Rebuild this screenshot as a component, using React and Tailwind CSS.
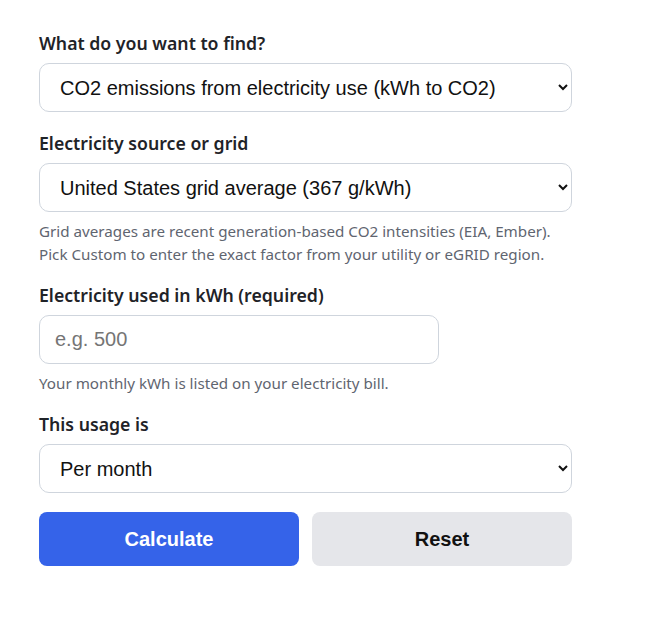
import React from "react";

const labelCls =
  "block mb-2 text-[17.7px] leading-6 font-semibold text-[#1f2328] [font-family:'Noto_Sans',sans-serif]";
const fieldCls =
  "block w-full h-[49px] rounded-[10px] border border-[#cfd5dd] bg-white pl-4 pr-3 text-[20px] text-[#111] [font-family:'Liberation_Sans',Arial,sans-serif] outline-none";
const helpCls =
  "mt-2 text-[15.2px] leading-[23px] text-[#5f6570] [font-family:'Noto_Sans',sans-serif]";

export default function App() {
  return (
    <div className="min-h-[617px] w-[671px] bg-white">
      <form
        className="w-[533px] ml-[39px] pt-[31px] flex flex-col"
        onSubmit={(e) => e.preventDefault()}
      >
        <div>
          <label className={labelCls}>What do you want to find?</label>
          <select className={fieldCls} defaultValue="kwh">
            <option value="kwh">CO2 emissions from electricity use (kWh to CO2)</option>
            <option value="co2">Electricity use from CO2 emissions</option>
          </select>
        </div>

        <div className="mt-[19px]">
          <label className={labelCls}>Electricity source or grid</label>
          <select className={fieldCls} defaultValue="us">
            <option value="us">United States grid average (367 g/kWh)</option>
            <option value="custom">Custom</option>
          </select>
          <p className={helpCls}>
            Grid averages are recent generation-based CO2 intensities (EIA, Ember).
            <br />
            Pick Custom to enter the exact factor from your utility or eGRID region.
          </p>
        </div>

        <div className="mt-[17px]">
          <label className={labelCls}>Electricity used in kWh (required)</label>
          <input
            type="text"
            placeholder="e.g. 500"
            className="block w-[400px] h-[49px] rounded-[10px] border border-[#cfd5dd] bg-white px-[15px] text-[20px] text-[#111] placeholder:text-[#757575] [font-family:'Liberation_Sans',Arial,sans-serif] outline-none"
          />
          <p className={helpCls}>
            Your monthly kWh is listed on your electricity bill.
          </p>
        </div>

        <div className="mt-[17px]">
          <label className={labelCls}>This usage is</label>
          <select className={fieldCls} defaultValue="month">
            <option value="month">Per month</option>
            <option value="year">Per year</option>
          </select>
        </div>

        <div className="mt-[19px] grid grid-cols-2 gap-[13px]">
          <button
            type="submit"
            className="h-[54px] rounded-[8px] bg-[#3563e9] text-white text-[20px] font-bold [font-family:'Liberation_Sans',Arial,sans-serif]"
          >
            Calculate
          </button>
          <button
            type="reset"
            className="h-[54px] rounded-[8px] bg-[#e5e6ea] text-[#111] text-[20px] font-bold [font-family:'Liberation_Sans',Arial,sans-serif]"
          >
            Reset
          </button>
        </div>
      </form>
    </div>
  );
}
